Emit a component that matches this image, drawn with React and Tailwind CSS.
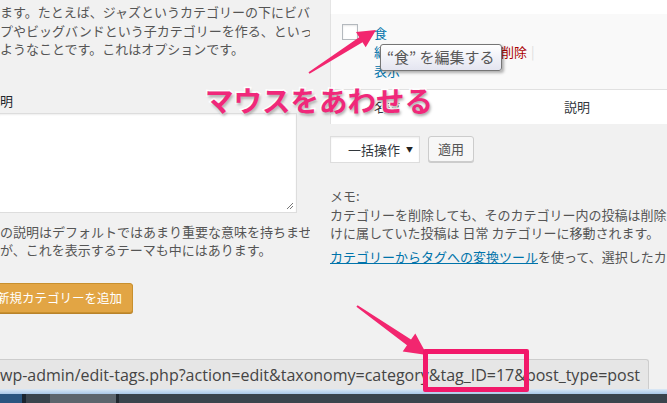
import React from 'react';

const arrowPoints = (x1, y1, x2, y2, tailW, shaftW, headL, headW) => {
  const dx = x2 - x1;
  const dy = y2 - y1;
  const len = Math.hypot(dx, dy);
  const ux = dx / len;
  const uy = dy / len;
  const px = -uy;
  const py = ux;
  const bx = x2 - ux * headL;
  const by = y2 - uy * headL;
  return [
    [x1 + (px * tailW) / 2, y1 + (py * tailW) / 2],
    [bx + (px * shaftW) / 2, by + (py * shaftW) / 2],
    [bx + (px * headW) / 2, by + (py * headW) / 2],
    [x2, y2],
    [bx - (px * headW) / 2, by - (py * headW) / 2],
    [bx - (px * shaftW) / 2, by - (py * shaftW) / 2],
    [x1 - (px * tailW) / 2, y1 - (py * tailW) / 2],
  ]
    .map((p) => p.map((v) => v.toFixed(1)).join(','))
    .join(' ');
};

const App = () => {
  return (
    <div className="relative flex h-[403px] w-[667px] flex-col overflow-hidden bg-[#f1f1f1] font-['Noto_Sans_CJK_JP',sans-serif] text-[#444]">
      <div className="flex h-[359px] shrink-0">
        {/* left: new category form */}
        <div className="w-[310px] shrink-0 overflow-hidden">
          <div className="whitespace-nowrap pt-[3px] text-[13px] leading-[18.5px] text-[#555]">
            <div>ます。たとえば、ジャズというカテゴリーの下にビバ</div>
            <div>プやビッグバンドという子カテゴリーを作る、といっ</div>
            <div>ようなことです。これはオプションです。</div>
          </div>
          <div className="-ml-[13px] mt-[32px] whitespace-nowrap text-[13px] leading-[19px] text-[#23282d]">説明</div>
          <div className="relative -ml-[2px] mt-[3.5px] h-[100px] w-[299px] border border-[#ddd] bg-white shadow-[inset_0_1px_2px_rgba(0,0,0,0.07)]">
            <svg className="absolute bottom-[2px] right-[2px] h-[9px] w-[9px]" viewBox="0 0 9 9">
              <path d="M8 2 L2 8 M8 5 L5 8" stroke="#777" strokeWidth="1" />
            </svg>
          </div>
          <div className="mt-[10px] whitespace-nowrap text-[13px] leading-[18px] text-[#555]">
            <div>の説明はデフォルトではあまり重要な意味を持ちませ</div>
            <div>が、これを表示するテーマも中にはあります。</div>
          </div>
          <button className="-ml-[4px] mt-[24px] flex h-[30px] w-[137px] items-center justify-end whitespace-nowrap rounded-[3px] border border-[#c8902e] bg-[#e2a544] pr-[10px] text-[12.5px] text-white shadow-[0_1px_0_#b9822a]">
            新規カテゴリーを追加
          </button>
        </div>

        {/* right: category list */}
        <div className="ml-[20px] flex-1 overflow-hidden">
          <div className="h-[14px] border-l border-[#e5e5e5] bg-white" />
          <div className="flex h-[76px] border-b border-l border-[#e1e1e1] bg-[#f9f9f9] pl-[11px]">
            <div className="mt-[10px] h-[16px] w-[16px] shrink-0 border border-[#b4b9be] bg-white shadow-[inset_0_1px_2px_rgba(0,0,0,0.1)]" />
            <div className="ml-[16px] whitespace-nowrap pt-[8.5px] text-[13px] leading-[19px]">
              <div className="text-[#0073aa]">食</div>
              <div>
                <span className="text-[#0073aa]">編集</span>
                <span className="px-[4px] text-[#ddd]">|</span>
                <span className="text-[#0073aa]">クイック編集</span>
                <span className="px-[4px] text-[#ddd]">|</span>
                <span className="text-[#a00]">削除</span>
                <span className="px-[4px] text-[#ddd]">|</span>
              </div>
              <div className="text-[#0073aa]">表示</div>
            </div>
          </div>
          <div className="flex h-[34px] items-center border-l border-[#e1e1e1] bg-white whitespace-nowrap text-[13px] text-[#32373c]">
            <span className="ml-[43px] w-[190px]">名前</span>
            <span>説明</span>
          </div>

          <div className="mt-[12px] flex items-start gap-[8px]">
            <div className="flex h-[27px] w-[90px] items-center whitespace-nowrap border border-[#ddd] bg-white pl-[17px] text-[13px] text-[#32373c] shadow-[inset_0_1px_2px_rgba(0,0,0,0.07)]">
              <span>一括操作</span>
              <span className="ml-[6px] text-[7px] text-[#222]">▼</span>
            </div>
            <button className="flex h-[26px] w-[46px] items-center justify-center rounded-[3px] border border-[#ccc] bg-[#f7f7f7] text-[13px] text-[#555] shadow-[0_1px_0_#ccc]">
              適用
            </button>
          </div>

          <div className="mt-[24px] whitespace-nowrap text-[13px] leading-[18.5px] text-[#555]">
            <div>メモ:</div>
            <div>カテゴリーを削除しても、そのカテゴリー内の投稿は削除されません。</div>
            <div>けに属していた投稿は 日常 カテゴリーに移動されます。</div>
          </div>
          <div className="mt-[5px] whitespace-nowrap text-[13px] leading-[18.5px] text-[#555]">
            <span className="text-[#0073aa] underline">カテゴリーからタグへの変換ツール</span>
            を使って、選択したカテゴリーをタグに変換できます。
          </div>
        </div>
      </div>

      {/* browser status bar */}
      <div className="flex h-[30px] shrink-0">
        <div className="flex w-[649px] items-center overflow-hidden whitespace-nowrap rounded-tr-[3px] border-r border-t border-[#cdcdcd] bg-[#e6e6e6] font-['Open_Sans',sans-serif] text-[16px] text-[#444]">
          wp-admin/edit-tags.php?action=edit&amp;taxonomy=category&amp;tag_ID=17&amp;post_type=post
        </div>
      </div>

      {/* taskbar edge */}
      <div className="flex-1">
        <div className="h-[5px] bg-gradient-to-b from-[#dce9f6] to-[#a9c8e8]" />
        <div className="flex h-[9px] bg-[#3a444d]">
          <div className="w-[22px] bg-[#2a5580]" />
          <div className="w-[4px] bg-[#1b2530]" />
          <div className="ml-[24px] w-[66px] bg-[#5c656d]" />
          <div className="w-[3px] bg-[#20282f]" />
        </div>
      </div>

      {/* annotations */}
      <svg className="pointer-events-none absolute left-0 top-0 h-[403px] w-[667px]" viewBox="0 0 667 403">
        <polygon points={arrowPoints(309, 73, 376, 30, 2, 6, 18, 18)} fill="#f2266f" />
        <polygon points={arrowPoints(357, 306, 427, 355, 2, 7, 22, 22)} fill="#f2266f" />
      </svg>

      <div className="absolute left-[380px] top-[44px] flex h-[27px] w-[122px] items-center whitespace-nowrap rounded-[3px] border border-[#767676] bg-gradient-to-b from-white to-[#e4e5f0] pl-[6px] text-[15px] text-[#575757] shadow-[2px_2px_3px_rgba(0,0,0,0.3)]">
        “食” を編集する
      </div>

      <div className="pointer-events-none absolute left-[205px] top-[86px] whitespace-nowrap text-[28.5px] font-bold leading-none text-[#f0287a] [-webkit-text-stroke:3px_white] [paint-order:stroke_fill] [text-shadow:1px_2px_3px_rgba(0,0,0,0.35)]">
        マウスをあわせる
      </div>

      <div className="pointer-events-none absolute left-[423px] top-[349px] h-[43px] w-[106px] rounded-[2px] border-[5px] border-[#f2196a]" />
    </div>
  );
};

export default App;
